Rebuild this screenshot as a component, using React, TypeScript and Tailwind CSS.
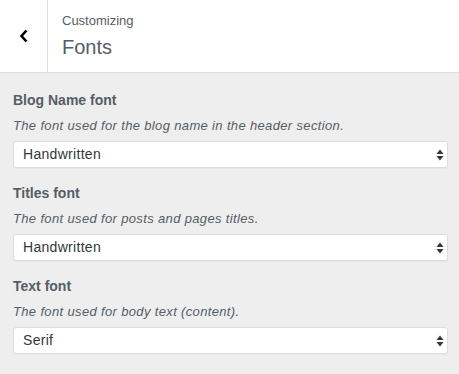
import React from 'react';

const sections = [
  { label: 'Blog Name font', desc: 'The font used for the blog name in the header section.', value: 'Handwritten' },
  { label: 'Titles font', desc: 'The font used for posts and pages titles.', value: 'Handwritten' },
  { label: 'Text font', desc: 'The font used for body text (content).', value: 'Serif' },
];

const Arrows = () => (
  <svg width="8" height="12" viewBox="0 0 8 12" className="text-[#32373c]">
    <path d="M4 0.5 L7.5 5 H0.5 Z" fill="currentColor" />
    <path d="M4 11.5 L7.5 7 H0.5 Z" fill="currentColor" />
  </svg>
);

export default function App() {
  return (
    <div className="w-[459px] h-[374px] bg-[#eeeeee] font-['Liberation_Sans',sans-serif] overflow-hidden">
      {/* Header */}
      <div className="h-[73px] bg-white border-b border-[#dddddd] flex">
        <div className="w-[48px] border-r border-[#dddddd] flex items-center justify-center">
          <svg width="10" height="14" viewBox="0 0 10 14">
            <path d="M7.5 1.5 L2.5 7 L7.5 12.5" fill="none" stroke="#000" strokeWidth="2.6" />
          </svg>
        </div>
        <div className="pl-[14px] pt-[13px]">
          <div className="text-[13px] leading-[16px] text-[#555d66]">Customizing</div>
          <div className="text-[20px] leading-[26px] mt-[5px] text-[#555d66] font-light">Fonts</div>
        </div>
      </div>

      {/* Controls */}
      <div className="pl-[13px] pr-[11px] pt-[18px] flex flex-col gap-[16px]">
        {sections.map((s) => (
          <div key={s.label}>
            <div className="text-[14px] leading-[18px] font-bold text-[#555d66]">{s.label}</div>
            <div className="text-[13px] leading-[18px] italic tracking-[0.35px] text-[#555d66] mt-[8px]">{s.desc}</div>
            <div className="mt-[6px] h-[27px] bg-white border border-[#dddddd] rounded-[3px] flex items-center justify-between pl-[9px] pr-[3px] shadow-[0_1px_0_rgba(0,0,0,0.03)]">
              <span className="text-[14px] tracking-[0.3px] text-[#32373c]">{s.value}</span>
              <Arrows />
            </div>
          </div>
        ))}
      </div>
    </div>
  );
}
